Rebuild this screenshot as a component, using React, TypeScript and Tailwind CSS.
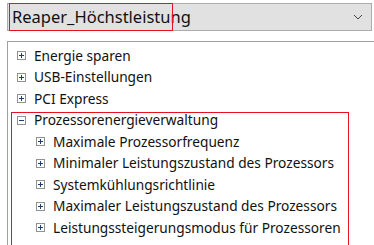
const font = { fontFamily: '"Noto Sans", "Open Sans", sans-serif' };

const ExpandBox = ({ open }: { open?: boolean }) => (
  <span className="w-[9px] h-[9px] border border-[#919191] bg-white flex items-center justify-center shrink-0">
    <svg width="7" height="7" viewBox="0 0 7 7">
      <path d="M1 3.5h5" stroke="#1c3f73" strokeWidth="1" />
      {!open && <path d="M3.5 1v5" stroke="#1c3f73" strokeWidth="1" />}
    </svg>
  </span>
);

const Row = ({ label, level = 0, open }: { label: string; level?: number; open?: boolean }) => (
  <div className={`h-[21.5px] flex items-center gap-[8px] ${level ? "pl-[28px]" : "pl-[9px]"}`}>
    <ExpandBox open={open} />
    <span className="text-[13.7px] text-[#111] whitespace-nowrap leading-none">{label}</span>
  </div>
);

const subItems = [
  "Maximale Prozessorfrequenz",
  "Minimaler Leistungszustand des Prozessors",
  "Systemkühlungsrichtlinie",
  "Maximaler Leistungszustand des Prozessors",
  "Leistungssteigerungsmodus für Prozessoren",
];

export default function App() {
  return (
    <div className="w-[374px] h-[245px] bg-white overflow-hidden relative" style={font}>
      {/* plan dropdown */}
      <div className="mt-[3px] ml-[7px] w-[365px] h-[28px] border border-[#adadad] bg-[#e1e1e1] flex items-center justify-between pl-[4px] pr-[7px] relative">
        <span className="text-[16.5px] text-[#111] leading-none">Reaper_Höchstleistung</span>
        <svg width="10" height="6" viewBox="0 0 10 6" className="mr-[1px]">
          <path d="M1 1l4 4 4-4" stroke="#444" strokeWidth="1" fill="none" />
        </svg>
        <div className="absolute left-[1px] top-[-1px] w-[164px] h-[28px] border border-[#e81123] pointer-events-none" />
      </div>

      {/* settings tree */}
      <div className="mt-[10px] ml-[7px] border-l border-t border-[#a0a0a0] h-[210px] pt-[3px] relative">
        <Row label="Energie sparen" />
        <Row label="USB-Einstellungen" />
        <Row label="PCI Express" />
        <Row label="Prozessorenergieverwaltung" open />
        {subItems.map((s) => (
          <Row key={s} label={s} level={1} />
        ))}
        <div className="absolute left-[3px] top-[70px] w-[338px] h-[150px] border border-[#e81123] pointer-events-none" />
      </div>
    </div>
  );
}
